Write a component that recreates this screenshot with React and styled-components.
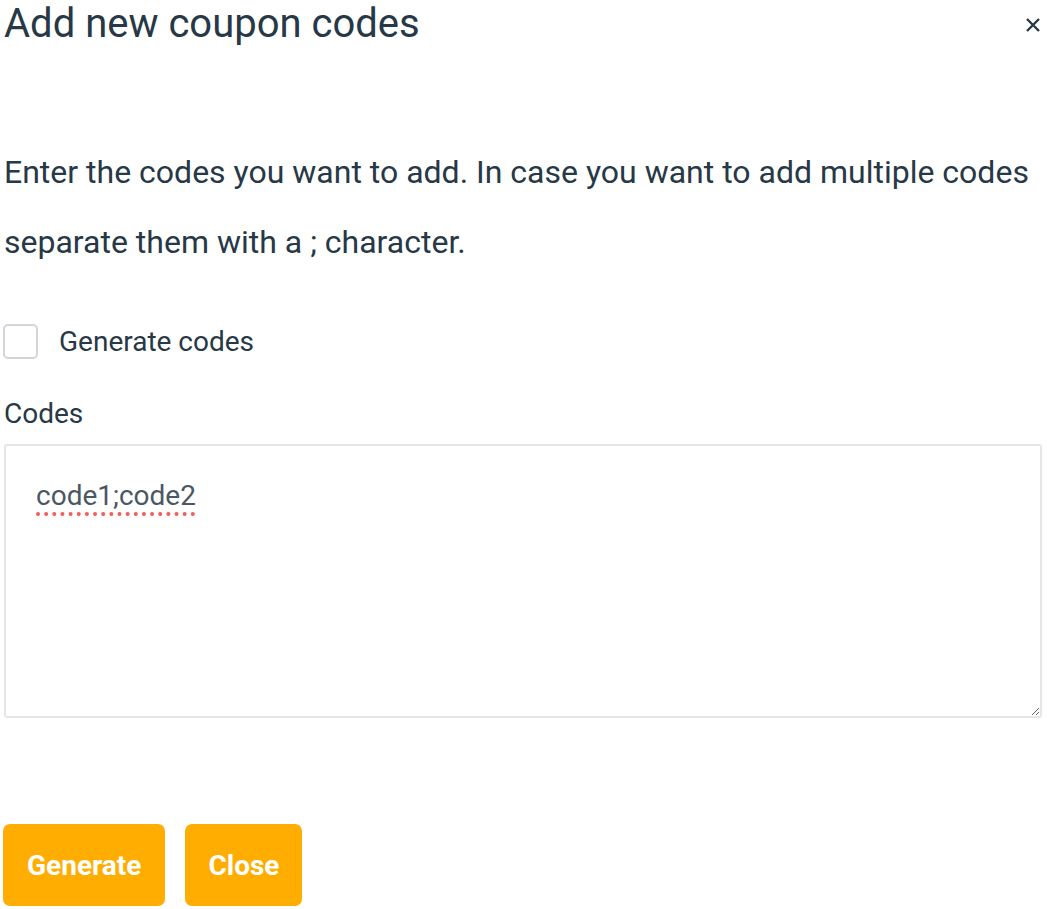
import React from 'react';
import styled, { createGlobalStyle } from 'styled-components';

const Styles = createGlobalStyle`
	html,
	body {
		margin: 0;
		background: #fff;
		font-family: Roboto, "Liberation Sans", sans-serif;
		color: #273846;
	}
`;

const Modal = styled.div`
	box-sizing: border-box;
	display: flex;
	flex-direction: column;
	padding: 0 5px 0 4px;
	width: 1047px;
`;

const Header = styled.div`
	align-items: flex-start;
	display: flex;
	justify-content: space-between;
`;

const Title = styled.h2`
	font-size: 40px;
	font-weight: 400;
	line-height: 48px;
	margin: 0;
`;

const CloseIcon = styled.button`
	background: none;
	border: 0;
	color: #273846;
	cursor: pointer;
	display: flex;
	margin: 17px 1px 0 0;
	padding: 0;
`;

const Intro = styled.p`
	font-size: 32px;
	line-height: 70px;
	margin: 89px 0 0;
`;

const CheckRow = styled.label`
	align-items: center;
	display: flex;
	font-size: 28px;
	gap: 21px;
	margin-top: 47px;
`;

const Box = styled.span`
	border: 2px solid #d2d6da;
	border-radius: 5px;
	box-sizing: border-box;
	display: block;
	height: 35px;
	margin-left: -1px;
	width: 35px;
`;

const FieldLabel = styled.div`
	font-size: 28px;
	line-height: 33px;
	margin-top: 38px;
`;

const CodesArea = styled.textarea`
	border: 2px solid #e6e6e6;
	border-radius: 3px;
	box-sizing: border-box;
	color: #4a5864;
	font-family: Roboto, "Liberation Sans", sans-serif;
	font-size: 28px;
	height: 274px;
	margin-top: 14px;
	outline: none;
	padding: 33px 30px;
	text-decoration: underline dotted #f25c5c;
	text-decoration-thickness: 4px;
	text-underline-offset: 7px;
	width: 100%;
`;

const Actions = styled.div`
	display: flex;
	gap: 20px;
	margin: 106px 0 0 -1px;
`;

const Button = styled.button`
	background: #ffad00;
	border: 0;
	border-radius: 7px;
	color: #fff;
	font-family: Roboto, "Liberation Sans", sans-serif;
	font-size: 28px;
	font-weight: 700;
	height: 82px;
	padding: 0 ${p => p.$pad}px;
`;

const App = () => (
	<Modal>
		<Styles />
		<Header>
			<Title>Add new coupon codes</Title>
			<CloseIcon aria-label='Close'>
				<svg width='16' height='16' viewBox='0 0 16 16'>
					<path d='M2 2L14 14M14 2L2 14' stroke='currentColor' strokeWidth='2.4' />
				</svg>
			</CloseIcon>
		</Header>
		<Intro>
			Enter the codes you want to add. In case you want to add multiple codes separate them with a ; character.
		</Intro>
		<CheckRow>
			<Box />
			Generate codes
		</CheckRow>
		<FieldLabel>Codes</FieldLabel>
		<CodesArea defaultValue='code1;code2' spellCheck={false} />
		<Actions>
			<Button $pad={24}>Generate</Button>
			<Button $pad={23}>Close</Button>
		</Actions>
	</Modal>
);

export default App;
